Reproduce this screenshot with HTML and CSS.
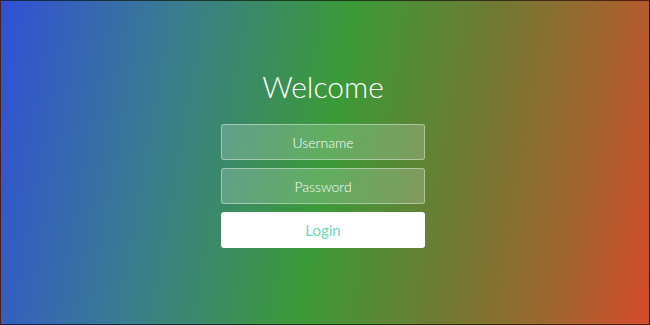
FILE: index.html
```html
<!DOCTYPE html>
<html lang="en">
<head>
<meta charset="utf-8">
<title>Welcome</title>
<link rel="stylesheet" href="styles.css">
</head>
<body>
<div class="page">
  <form class="login">
    <h1 class="title">Welcome</h1>
    <input class="field" type="text" placeholder="Username">
    <input class="field" type="password" placeholder="Password">
    <button class="submit" type="button">Login</button>
  </form>
</div>
</body>
</html>
```
FILE: styles.css
```css
html, body {
  margin: 0;
  padding: 0;
}
body {
  width: 650px;
  height: 325px;
  overflow: hidden;
  font-family: Lato, "Open Sans", sans-serif;
}
.page {
  box-sizing: border-box;
  width: 650px;
  height: 325px;
  border: 1px solid rgba(0, 0, 0, 0.6);
  background: linear-gradient(100deg, #3150d6 0%, #3a7c90 25%, #3b9a38 50%, #6f7a34 70%, #a2642e 87%, #d64a2a 100%);
  display: flex;
  justify-content: center;
  padding: 67px 4px 0 0;
}
.login {
  width: 204px;
  display: flex;
  flex-direction: column;
  align-items: stretch;
  gap: 8px;
}
.title {
  margin: 0 0 12px;
  font-weight: 300;
  font-size: 30px;
  line-height: 36px;
  color: #ffffff;
  text-align: center;
}
.field {
  box-sizing: border-box;
  height: 36px;
  margin: 0;
  padding: 0 10px;
  border: 1px solid rgba(255, 255, 255, 0.4);
  border-radius: 3px;
  background: rgba(255, 255, 255, 0.2);
  font-family: Lato, "Open Sans", sans-serif;
  font-weight: 300;
  font-size: 14px;
  color: #ffffff;
  text-align: center;
  outline: none;
}
.field::placeholder {
  color: #ffffff;
  opacity: 1;
}
.submit {
  box-sizing: border-box;
  height: 36px;
  margin: 0;
  padding: 0;
  border: 0;
  border-radius: 3px;
  background: #ffffff;
  font-family: Lato, "Open Sans", sans-serif;
  font-weight: 400;
  font-size: 15px;
  color: #6fd9b2;
  cursor: pointer;
}
```
